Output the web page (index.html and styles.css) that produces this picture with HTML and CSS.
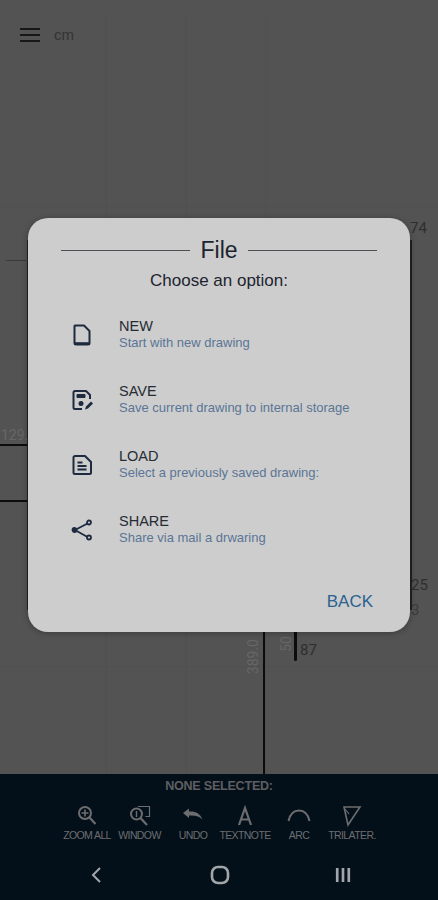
FILE: index.html
```html
<!DOCTYPE html>
<html lang="en">
  <head>
    <meta charset="UTF-8" />
    <meta name="viewport" content="width=device-width, initial-scale=1.0" />
    <title>File dialog</title>
    <link rel="stylesheet" href="styles.css">
  </head>
  <body>
    <div class="canvas">
      <div class="grid-line grid-v g1"></div>
      <div class="grid-line grid-v g2"></div>
      <div class="grid-line grid-v g3"></div>
      <div class="grid-line grid-h g4"></div>
      <div class="grid-line grid-h g5"></div>

      <div class="wall wall-main"></div>
      <div class="wall wall-short"></div>
      <div class="wall wall-top"></div>
      <div class="wall wall-mid"></div>
      <div class="wall wall-right"></div>
      <div class="wall wall-left"></div>
      <div class="dash"></div>

      <span class="dim d74">74</span>
      <span class="dim d129">129.</span>
      <span class="dim d25">25</span>
      <span class="dim d3">3</span>
      <span class="dim d87">87</span>
      <span class="dim dim-v d389">389.0</span>
      <span class="dim dim-v d50">50</span>

      <header class="topbar">
        <svg class="menu-icon" width="20" height="16" viewBox="0 0 20 16"><path d="M0 2h20M0 8h20M0 14h20" stroke="#16181a" stroke-width="2"/></svg>
        <span class="unit">cm</span>
      </header>

      <div class="overlay">
        <section class="dialog">
          <div class="dialog-title">
            <span class="rule"></span>
            <h2>File</h2>
            <span class="rule"></span>
          </div>
          <p class="prompt">Choose an option:</p>

          <ul class="options">
            <li class="option">
              <svg class="option-icon" width="24" height="24" viewBox="0 0 24 24" fill="none" stroke="#1d2a3f" stroke-width="2" stroke-linejoin="round"><path d="M5 2.500h9l5.500 5.500v12a1.500 1.500 0 0 1-1.500 1.500H6A1.500 1.500 0 0 1 4.500 20V3z"/><path d="M4.500 20.500h15" stroke-width="2.600"/></svg>
              <div>
                <div class="option-name">NEW</div>
                <div class="option-desc">Start with new drawing</div>
              </div>
            </li>
            <li class="option">
              <svg class="option-icon" width="24" height="24" viewBox="0 0 24 24" fill="none" stroke="#1d2a3f" stroke-width="2" stroke-linejoin="round"><path d="M20 11V7l-4-4H5a1.500 1.500 0 0 0-1.500 1.500v15A1.500 1.500 0 0 0 5 21h7"/><path d="M7 6.500h8v3H7z" fill="#1d2a3f" stroke-width="1"/><circle cx="11" cy="15.500" r="2.500" fill="#1d2a3f" stroke="none"/><path d="M15 21.500l1-3 5-5 2 2-5 5z" fill="#1d2a3f" stroke="none"/></svg>
              <div>
                <div class="option-name">SAVE</div>
                <div class="option-desc">Save current drawing to internal storage</div>
              </div>
            </li>
            <li class="option">
              <svg class="option-icon" width="24" height="24" viewBox="0 0 24 24" fill="none" stroke="#1d2a3f" stroke-width="2" stroke-linejoin="round"><path d="M5.500 3h10l6 6v10.500a1.500 1.500 0 0 1-1.500 1.500H5.500A1.500 1.500 0 0 1 4 19.500v-15A1.500 1.500 0 0 1 5.500 3z" transform="translate(-.5 0)"/><path d="M7.500 9.500h5M7.500 13h9M7.500 16.500h9" stroke-width="1.800"/></svg>
              <div>
                <div class="option-name">LOAD</div>
                <div class="option-desc">Select a previously saved drawing:</div>
              </div>
            </li>
            <li class="option">
              <svg class="option-icon" width="24" height="24" viewBox="0 0 24 24" fill="none" stroke="#1d2a3f" stroke-width="1.800"><path d="M17.500 5.500L5 12l12.500 7"/><circle cx="19" cy="4.500" r="2"/><circle cx="19" cy="19.500" r="2"/><circle cx="4.500" cy="12" r="2" fill="#1d2a3f"/></svg>
              <div>
                <div class="option-name">SHARE</div>
                <div class="option-desc">Share via mail a drwaring</div>
              </div>
            </li>
          </ul>

          <div class="dialog-actions">
            <button class="back">BACK</button>
          </div>
        </section>
      </div>
    </div>

    <footer class="toolbar">
      <div class="selection">NONE SELECTED:</div>
      <div class="tools">
        <div class="tool tool-zoom">
          <svg width="22" height="22" viewBox="0 0 22 22" fill="none" stroke="#6d6d6f" stroke-width="2"><circle cx="9" cy="8" r="6"/><path d="M9 4.500v7M5.500 8h7" stroke-width="1.600"/><path d="M13.500 12.500l6 6.500" stroke-width="2.200"/></svg>
          <span>ZOOM ALL</span>
        </div>
        <div class="tool tool-window">
          <svg width="22" height="22" viewBox="0 0 22 22" fill="none" stroke="#6d6d6f" stroke-width="2"><path d="M9 1.500h11.500v10h-4" stroke-width="1.200"/><circle cx="7.500" cy="9" r="5.500"/><path d="M7.500 6v6" stroke-width="1.400"/><path d="M11.500 13l6.500 7" stroke-width="2.200"/></svg>
          <span>WINDOW</span>
        </div>
        <div class="tool tool-undo">
          <svg width="22" height="22" viewBox="0 0 22 22"><path d="M1 8l6-4.500v3c6-.5 11 1.500 13.500 8-3-3-7-4.500-13.500-4v2.500z" fill="#6d6d6f"/></svg>
          <span>UNDO</span>
        </div>
        <div class="tool tool-text">
          <svg width="22" height="22" viewBox="0 0 22 22" fill="none" stroke="#6d6d6f" stroke-width="2.200"><path d="M5 20L11 3l6 17M7 14.500h8"/></svg>
          <span>TEXTNOTE</span>
        </div>
        <div class="tool tool-arc">
          <svg width="24" height="22" viewBox="0 0 24 22" fill="none" stroke="#6d6d6f" stroke-width="2"><path d="M1.500 16C3 9 7 5.500 12 5.500S21 9 22.500 16"/></svg>
          <span>ARC</span>
        </div>
        <div class="tool tool-tri">
          <svg width="22" height="22" viewBox="0 0 22 22" fill="none" stroke="#6d6d6f" stroke-width="1.600"><path d="M3 2h16L7 20 3 2z"/><path d="M4 4l4 5" stroke-width="1.200"/></svg>
          <span>TRILATER.</span>
        </div>
      </div>
      <nav class="navbar">
        <svg width="14" height="20" viewBox="0 0 14 20" fill="none" stroke="#a2a6a9" stroke-width="2"><path d="M10 3L3 10l7 7"/></svg>
        <svg width="20" height="20" viewBox="0 0 20 20" fill="none" stroke="#a2a6a9" stroke-width="2.600"><rect x="2" y="2" width="16" height="16" rx="6"/></svg>
        <svg width="16" height="16" viewBox="0 0 18 18" fill="#a2a6a9"><path d="M1 1h3v16H1zM7.500 1h3v16h-3zM14 1h3v16h-3z"/></svg>
      </nav>
    </footer>
  </body>
</html>
```

FILE: styles.css
```css
* {
  box-sizing: border-box;
}
html,
body {
  height: 100%;
}
body {
  margin: 0;
  display: flex;
  flex-direction: column;
  background-color: #535353;
  font-family: "Liberation Sans", Arial, sans-serif;
  overflow: hidden;
}

/* drawing area */
.canvas {
  position: relative;
  height: 774px;
  overflow: hidden;
}
.topbar {
  display: flex;
  align-items: center;
  gap: 14px;
  padding: 26px 0 0 20px;
}
.unit {
  font-size: 15px;
  color: #333;
}
.menu-icon {
  display: block;
}

.grid-line {
  position: absolute;
  background-color: #505050;
}
.grid-v {
  top: 16px;
  bottom: 0;
  width: 1px;
}
.grid-h {
  left: 0;
  right: 0;
  height: 1px;
}
.g1 { left: 106px; }
.g2 { left: 186px; }
.g3 { left: 265px; }
.g4 { top: 206px; }
.g5 { top: 666px; }

.wall {
  position: absolute;
  background-color: #0c0c0c;
}
.wall-main { left: 263px; top: 630px; width: 2px; height: 144px; }
.wall-short { left: 294px; top: 630px; width: 3px; height: 31px; border-radius: 2px; }
.wall-top { left: 0; top: 444px; width: 28px; height: 2px; }
.wall-mid { left: 0; top: 500px; width: 28px; height: 2px; }
.wall-left { left: 27px; top: 240px; width: 1px; height: 370px; background-color: #222; }
.wall-right { left: 410px; top: 240px; width: 2px; height: 370px; background-color: #222; }
.dash {
  position: absolute;
  left: 6px;
  top: 260px;
  width: 22px;
  height: 1px;
  background-color: #3a3a3a;
}

.dim {
  position: absolute;
  font-family: Roboto, sans-serif;
  font-size: 15px;
  color: #2e2e2e;
}
.d74 { left: 410px; top: 219px; }
.d129 { left: 1px; top: 427px; color: #666; font-size: 14px; }
.d25 { left: 411px; top: 576px; }
.d3 { left: 411px; top: 601px; color: #3b3b3b; }
.d87 { left: 300px; top: 641px; }
.dim-v {
  writing-mode: vertical-rl;
  transform: rotate(180deg);
  color: #666;
  font-size: 14px;
}
.d389 { left: 245px; top: 639px; }
.d50 { left: 278px; top: 636px; }

/* dialog */
.overlay {
  position: absolute;
  top: 218px;
  left: 28px;
  right: 28px;
}
.dialog {
  height: 414px;
  padding: 19px 33px 0;
  border-radius: 20px;
  background-color: #cdcdcd;
  box-shadow: 0 1px 6px rgba(0, 0, 0, 0.3);
}
.dialog-title {
  display: flex;
  align-items: center;
  gap: 10px;
  height: 26px;
}
.dialog-title h2 {
  margin: 0;
  font-size: 23px;
  font-weight: 400;
  color: #1c2430;
}
.rule {
  flex: 1;
  height: 1px;
  background-color: #4b4f54;
}
.prompt {
  margin: 8px 0 0;
  text-align: center;
  font-size: 17px;
  line-height: 20px;
  color: #1c2430;
}
.options {
  margin: 11px 0 0;
  padding: 0;
  list-style: none;
}
.option {
  display: flex;
  align-items: center;
  gap: 25px;
  height: 65px;
  padding-left: 9px;
}
.option-icon {
  flex: none;
  display: block;
}
.option-name {
  font-size: 14.500px;
  line-height: 17px;
  color: #262c34;
}
.option-desc {
  font-size: 13px;
  line-height: 16px;
  color: #5a7596;
}
.dialog-actions {
  display: flex;
  justify-content: flex-end;
  margin-top: 30px;
  padding-right: 4px;
}
.back {
  padding: 0;
  border: 0;
  background: none;
  font-family: inherit;
  font-size: 17px;
  color: #2b628f;
}

/* bottom toolbar */
.toolbar {
  flex: 1;
  background-color: #03101a;
}
.selection {
  padding-top: 5px;
  text-align: center;
  font-size: 12.500px;
  line-height: 15px;
  font-weight: 700;
  color: #5f5f61;
  letter-spacing: -0.2px;
}
.tools {
  display: flex;
  justify-content: flex-start;
  padding: 11px 0 0 62px;
}
.tool {
  display: flex;
  flex-direction: column;
  align-items: center;
  font-size: 10.500px;
  line-height: 13px;
  color: #6d6d6f;
  white-space: nowrap;
  letter-spacing: -0.6px;
}
.tool svg {
  display: block;
  margin-bottom: 2px;
}
.tool-zoom { width: 50px; }
.tool-window { width: 45px; margin-left: 5px; }
.tool-undo { width: 30px; margin-left: 16px; }
.tool-text { width: 50px; margin-left: 12px; }
.tool-arc { width: 24px; margin-left: 17px; }
.tool-tri { width: 50px; margin-left: 16px; }

.navbar {
  display: flex;
  align-items: center;
  justify-content: space-between;
  padding: 23px 87px 0 90px;
}
```
